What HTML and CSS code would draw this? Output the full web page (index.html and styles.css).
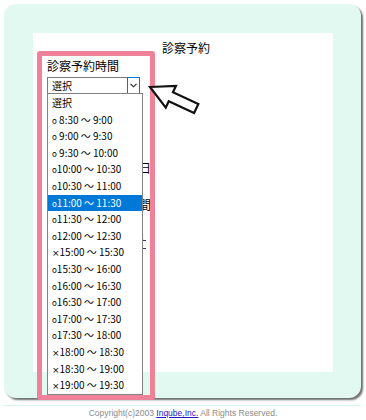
FILE: index.html
```html
<!DOCTYPE html>
<html lang="ja">
<head>
    <meta http-equiv="Content-Type" content="text/html; charset=utf-8"/>
    <link rel="stylesheet" href="styles.css">
</head>
<body>
<div class="card">
    <div class="panel">
        <h1 class="title">診察予約</h1>

        <div class="field">
            <div class="label">診察予約時間</div>
            <div class="select">
                <span class="select-value">選択</span>
                <span class="select-btn">
                    <svg width="7" height="5" viewBox="0 0 7 5"><polyline points="0.5,0.8 3.5,3.8 6.5,0.8" fill="none" stroke="#222" stroke-width="1.1"/></svg>
                </span>
                <ul class="options">
                    <li>選択</li>
                    <li><span class="ok">o</span> 8:30 ～ 9:00</li>
                    <li><span class="ok">o</span> 9:00 ～ 9:30</li>
                    <li><span class="ok">o</span> 9:30 ～ 10:00</li>
                    <li><span class="ok">o</span>10:00 ～ 10:30</li>
                    <li><span class="ok">o</span>10:30 ～ 11:00</li>
                    <li class="active"><span class="ok">o</span>11:00 ～ 11:30</li>
                    <li><span class="ok">o</span>11:30 ～ 12:00</li>
                    <li><span class="ok">o</span>12:00 ～ 12:30</li>
                    <li><span class="ng">×</span>15:00 ～ 15:30</li>
                    <li><span class="ok">o</span>15:30 ～ 16:00</li>
                    <li><span class="ok">o</span>16:00 ～ 16:30</li>
                    <li><span class="ok">o</span>16:30 ～ 17:00</li>
                    <li><span class="ok">o</span>17:00 ～ 17:30</li>
                    <li><span class="ok">o</span>17:30 ～ 18:00</li>
                    <li><span class="ng">×</span>18:00 ～ 18:30</li>
                    <li><span class="ng">×</span>18:30 ～ 19:00</li>
                    <li><span class="ng">×</span>19:00 ～ 19:30</li>
                </ul>
            </div>
        </div>

        <!-- rows hidden under the open dropdown -->
        <div class="under">
            <p class="row first">ご予約日</p>
            <p class="row">ご予約時間</p>
            <p class="links"><a href="#">予約確認&nbsp;&nbsp;</a></p>
            <p class="links second"><a href="#">予約取消&nbsp;&nbsp;</a></p>
        </div>

        <div class="highlight"></div>
        <svg class="pointer" width="60" height="42" viewBox="0 0 60 42">
            <g transform="translate(5,8) rotate(25)">
                <polygon points="0,0 23,-12 23,-5 51,-5 51,5 23,5 23,12" fill="#fff" stroke="#111" stroke-width="2.2" stroke-linejoin="miter"/>
            </g>
        </svg>
    </div>
</div>

<hr class="rule">
<p class="footer">Copyright(c)2003 <a href="#">Inqube,Inc.</a> All Rights Reserved.</p>
</body>
</html>
```

FILE: styles.css
```css
body {
    margin: 0;
    font-family: "Noto Sans CJK JP", "Noto Sans", sans-serif;
    color: #000;
    background: #fff;
}

.card {
    width: 357px;
    height: 394px;
    margin: 4px 0 0 4px;
    padding: 29px 0 0 29px;
    box-sizing: border-box;
    background: #e1f9f0;
    border-radius: 12px;
    box-shadow: 2px 2px 2px #6d6d6d;
}

.panel {
    width: 300px;
    height: 339px;
    background: #fff;
    position: relative;
}

.title {
    margin: 0;
    padding: 7px 0 0 6px;
    font-size: 12px;
    font-weight: normal;
    line-height: 16px;
    text-align: center;
}

.field {
    padding-left: 14px;
}

.label {
    margin-top: 2px;
    font-size: 12px;
    line-height: 15px;
}

.select {
    position: relative;
    width: 93px;
    height: 17px;
    margin-top: 4px;
    box-sizing: border-box;
    border: 1px solid #7a7a7a;
    display: flex;
    align-items: center;
    font-size: 10px;
}

.select-value {
    flex: 1;
    padding-left: 4px;
    line-height: 15px;
}

.select-btn {
    width: 13px;
    height: 17px;
    margin: -1px -1px -1px 0;
    box-sizing: border-box;
    border: 1px solid #0078d7;
    display: flex;
    align-items: center;
    justify-content: center;
}

.options {
    position: absolute;
    top: 15px;
    left: -1px;
    z-index: 2;
    width: 96px;
    margin: 0;
    padding: 1px 0 0;
    box-sizing: border-box;
    list-style: none;
    background: #fff;
    border: 1px solid #828282;
}

.options li {
    height: 16.6px;
    line-height: 16.6px;
    padding-left: 4px;
    font-size: 10px;
    white-space: nowrap;
}

.options li.active {
    background: #0078d7;
    color: #fff;
}

.ok {
    font-size: 8px;
}

.ng {
    font-family: "DejaVu Sans", sans-serif;
    font-size: 9px;
}

.under {
    width: 118px;
    text-align: right;
    font-size: 12px;
}

.row {
    margin: 21px 0 0;
    line-height: 16px;
}

.row.first {
    margin-top: 66px;
}

.links {
    width: 113px;
    margin: 20px 0 0;
    font-size: 6px;
    line-height: 8px;
}

.links.second {
    margin-top: 0;
}

.links a {
    color: #3a2a9a;
}

.highlight {
    position: absolute;
    left: 4px;
    top: 18px;
    z-index: 3;
    width: 118px;
    height: 349px;
    box-sizing: border-box;
    border: 5px solid #ef8198;
    border-radius: 3px;
}

.pointer {
    position: absolute;
    left: 112px;
    top: 46px;
    z-index: 3;
}

.rule {
    width: 357px;
    margin: 7px 0 0 4px;
    border: 0;
    border-top: 1px solid #d6f5eb;
}

.footer {
    margin: 1px 0 0;
    font-family: "Liberation Sans", Arial, sans-serif;
    font-size: 8.5px;
    line-height: 12px;
    color: #8a8a8a;
    text-align: center;
}

.footer a {
    color: #1a1acc;
}
```
